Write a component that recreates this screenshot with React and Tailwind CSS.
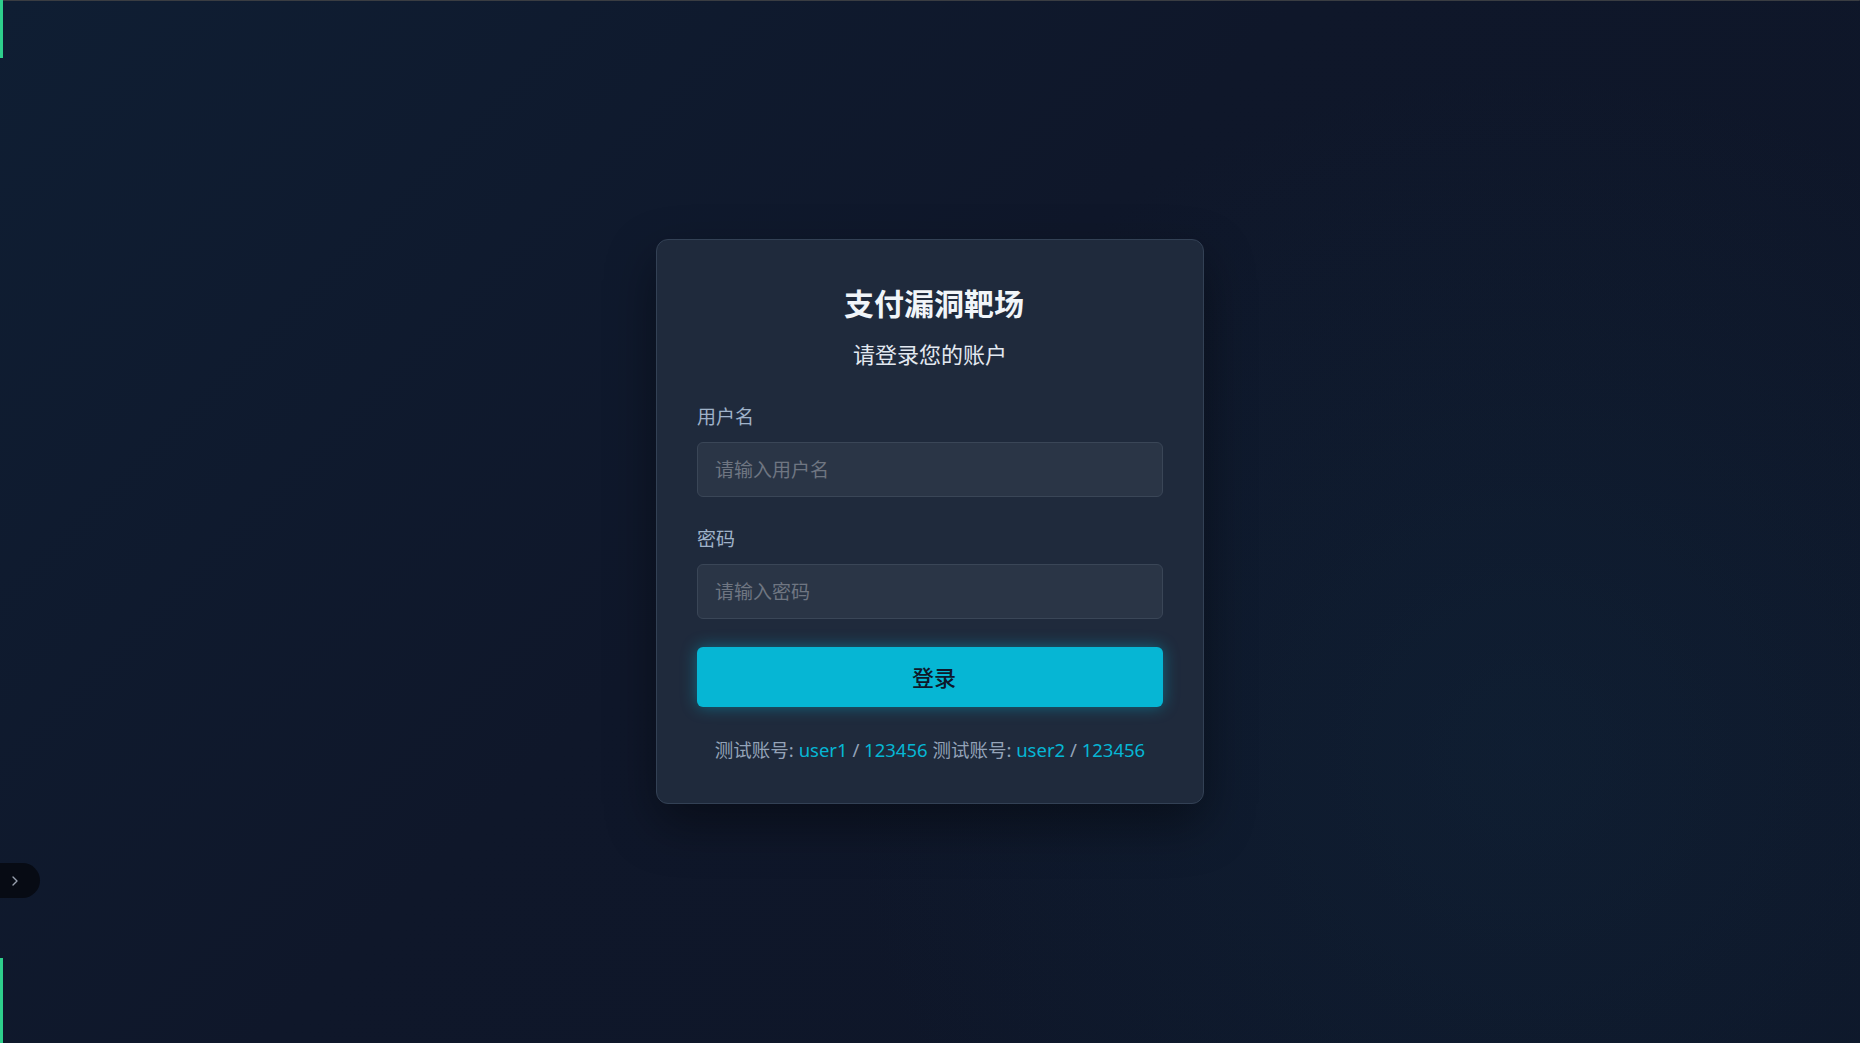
import { useState } from "react";
import { ChevronRight } from "lucide-react";

const FONT = "font-['Noto_Sans','Noto_Sans_CJK_SC',sans-serif]";

export default function App() {
  const [username, setUsername] = useState("");
  const [password, setPassword] = useState("");

  return (
    <div
      className={`relative min-h-[1043px] w-full flex items-center justify-center ${FONT} bg-[radial-gradient(circle_at_82%_72%,rgba(16,42,64,0.38),transparent_40%),linear-gradient(135deg,#0f1e33_0%,#0f172a_45%,#0e1628_100%)]`}
    >
      {/* window frame bits */}
      <div className="absolute top-0 left-0 right-0 h-px bg-[#3a3d42] rounded-tr-lg" />
      <div className="absolute top-0 left-0 w-[3px] h-[58px] bg-[#2ecf8c]" />
      <div className="absolute bottom-0 left-0 w-[3px] h-[85px] bg-[#2ecf8c]" />

      <button
        type="button"
        className="absolute left-0 top-[863px] w-10 h-[35px] rounded-r-full bg-[#070b14] flex items-center pl-[7px] text-gray-400"
      >
        <ChevronRight className="w-4 h-4" strokeWidth={2} />
      </button>

      <div className="w-[548px] bg-[#1f2a3c] border border-[#334155] rounded-xl px-10 pt-[46px] pb-10 shadow-[0_20px_50px_rgba(0,0,0,0.4)]">
        <h1 className="text-[30px] leading-9 font-bold text-slate-100 text-center pl-2">支付漏洞靶场</h1>
        <p className="mt-[18px] text-[22px] leading-7 text-slate-200 text-center">请登录您的账户</p>

        <form className="mt-9" onSubmit={(e) => e.preventDefault()}>
          <label className="block text-[19px] leading-[27px] text-[#9fb2c9]">用户名</label>
          <input
            value={username}
            onChange={(e) => setUsername(e.target.value)}
            placeholder="请输入用户名"
            className="mt-[11px] w-full h-[55px] rounded-md bg-[#2a3546] border border-[#3a4657] px-[17px] text-[19px] text-slate-100 placeholder:text-[#6f7682] outline-none"
          />

          <label className="block mt-[29px] text-[19px] leading-[27px] text-[#9fb2c9]">密码</label>
          <input
            type="password"
            value={password}
            onChange={(e) => setPassword(e.target.value)}
            placeholder="请输入密码"
            className="mt-[11px] w-full h-[55px] rounded-md bg-[#2a3546] border border-[#3a4657] px-[17px] text-[19px] text-slate-100 placeholder:text-[#6f7682] outline-none"
          />

          <button
            type="submit"
            className="mt-[28px] w-full h-[60px] rounded-md bg-[#06b6d4] text-[22px] font-medium text-[#0f172a] pl-2 shadow-[0_0_16px_rgba(6,182,212,0.45)]"
          >
            登录
          </button>
        </form>

        <p className="mt-[29px] text-[18.5px] leading-[27px] text-center text-[#94a3b8]">
          测试账号: <span className="text-[#06b6d4]">user1</span> / <span className="text-[#06b6d4]">123456</span> 测试账号:{" "}
          <span className="text-[#06b6d4]">user2</span> / <span className="text-[#06b6d4]">123456</span>
        </p>
      </div>
    </div>
  );
}
